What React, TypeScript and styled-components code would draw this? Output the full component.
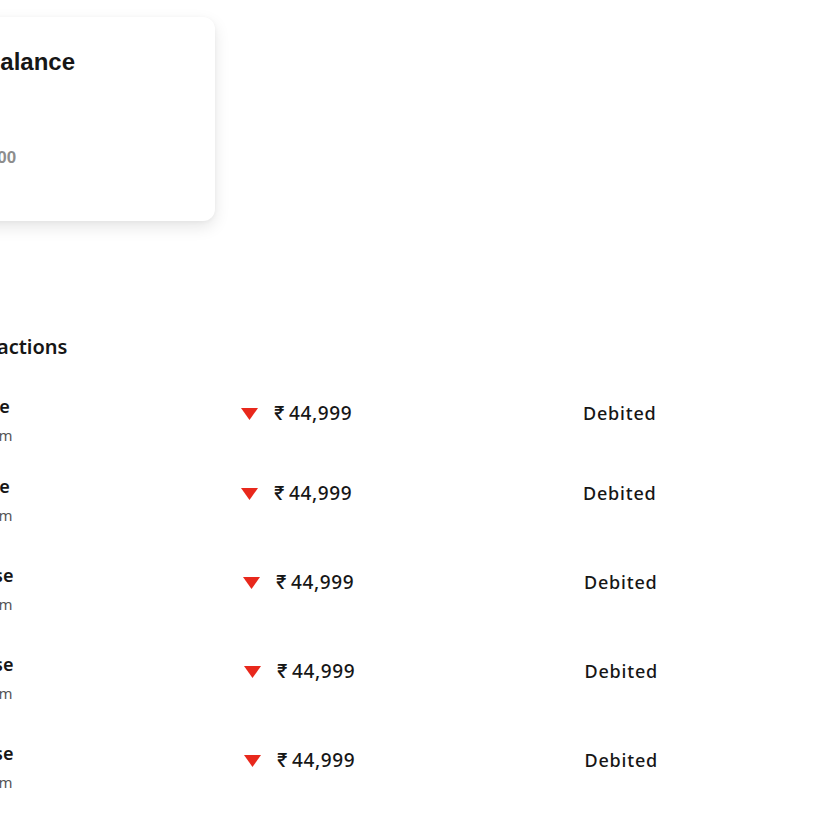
import React from "react";
import styled, { createGlobalStyle } from "styled-components";

const Global = createGlobalStyle`
  html, body { margin: 0; padding: 0; background: #ffffff; }
  body { overflow: hidden; }
  * { box-sizing: border-box; }
`;

const Page = styled.div`
  display: flex;
  flex-direction: column;
  align-items: flex-start;
  padding-top: 17px;
  margin-left: -70px;
  width: 900px;
`;

const Card = styled.div`
  margin-left: 29px;
  width: 256px;
  height: 204px;
  padding: 33px 24px 0;
  background: #ffffff;
  border-radius: 12px;
  box-shadow: 0 6px 16px rgba(0, 0, 0, 0.1), 0 1px 4px rgba(0, 0, 0, 0.04);
  display: flex;
  flex-direction: column;
  gap: 74px;
`;

const CardTitle = styled.h2`
  margin: 0;
  font-family: "Liberation Sans", Arial, sans-serif;
  font-weight: 700;
  font-size: 24px;
  line-height: 24px;
  color: #161616;
`;

const CardAmount = styled.div`
  font-family: "Liberation Sans", Arial, sans-serif;
  font-weight: 700;
  font-size: 17px;
  line-height: 20px;
  color: #8d8d8d;
`;

const Section = styled.section`
  margin-top: 114px;
  display: flex;
  flex-direction: column;
`;

const Heading = styled.h3`
  margin: 0 0 36px 14px;
  font-family: "Noto Sans", sans-serif;
  font-weight: 600;
  font-size: 20px;
  line-height: 24px;
  color: #161616;
`;

const Row = styled.div<{ $gap: number; $nudge: number }>`
  display: grid;
  grid-template-columns: ${(p) => 311 + p.$nudge}px ${(p) => 342 - p.$nudge / 2}px auto;
  align-items: start;
  margin-bottom: ${(p) => p.$gap}px;
`;

const NameCol = styled.div`
  display: flex;
  flex-direction: column;
  gap: 8px;
`;

const Name = styled.div<{ $indent: number }>`
  padding-left: ${(p) => p.$indent}px;
  font-family: "Noto Sans", sans-serif;
  font-weight: 600;
  font-size: 18px;
  line-height: 22px;
  color: #161616;
`;

const Sub = styled.div`
  font-family: "Noto Sans", sans-serif;
  font-weight: 400;
  font-size: 15px;
  line-height: 20px;
  color: #555555;
`;

const AmountCol = styled.div`
  margin-top: 7px;
  display: flex;
  align-items: center;
  gap: 16px;
`;

const Arrow = styled.svg`
  width: 17px;
  height: 12px;
  display: block;
`;

const Amount = styled.span`
  font-family: "Noto Sans", sans-serif;
  font-weight: 500;
  font-size: 19px;
  line-height: 22px;
  letter-spacing: 0.6px;
  color: #161616;
`;

const Rupee = styled.span`
  font-family: Inter, "Noto Sans", sans-serif;
  font-weight: 500;
  margin-right: 4px;
`;

const Status = styled.span`
  margin-top: 7px;
  font-family: "Noto Sans", sans-serif;
  font-weight: 500;
  font-size: 18px;
  line-height: 22px;
  letter-spacing: 0.8px;
  color: #161616;
`;

type Tx = { name: string; time: string; amount: string; status: string; gap: number; nudge: number; indent: number };

const txs: Tx[] = [
  { name: "Mobile", time: "at 10:30 am", amount: "44,999", status: "Debited", gap: 30, nudge: 0, indent: 20 },
  { name: "Mobile", time: "at 10:30 am", amount: "44,999", status: "Debited", gap: 39, nudge: 0, indent: 20 },
  { name: "Purchase", time: "at 10:30 am", amount: "44,999", status: "Debited", gap: 39, nudge: 2, indent: 3 },
  { name: "Purchase", time: "at 10:30 am", amount: "44,999", status: "Debited", gap: 39, nudge: 3, indent: 3 },
  { name: "Purchase", time: "at 10:30 am", amount: "44,999", status: "Debited", gap: 39, nudge: 3, indent: 3 },
];

export default function App() {
  return (
    <>
      <Global />
      <Page>
        <Card>
          <CardTitle>Balance</CardTitle>
          <CardAmount>0.00</CardAmount>
        </Card>
        <Section>
          <Heading>Transactions</Heading>
          {txs.map((t, i) => (
            <Row key={i} $gap={t.gap} $nudge={t.nudge}>
              <NameCol>
                <Name $indent={t.indent}>{t.name}</Name>
                <Sub>{t.time}</Sub>
              </NameCol>
              <AmountCol>
                <Arrow viewBox="0 0 17 12">
                  <path d="M0 0 H17 L8.5 12 Z" fill="#e8281c" />
                </Arrow>
                <Amount>
                  <Rupee>₹</Rupee>
                  {t.amount}
                </Amount>
              </AmountCol>
              <Status>{t.status}</Status>
            </Row>
          ))}
        </Section>
      </Page>
    </>
  );
}
